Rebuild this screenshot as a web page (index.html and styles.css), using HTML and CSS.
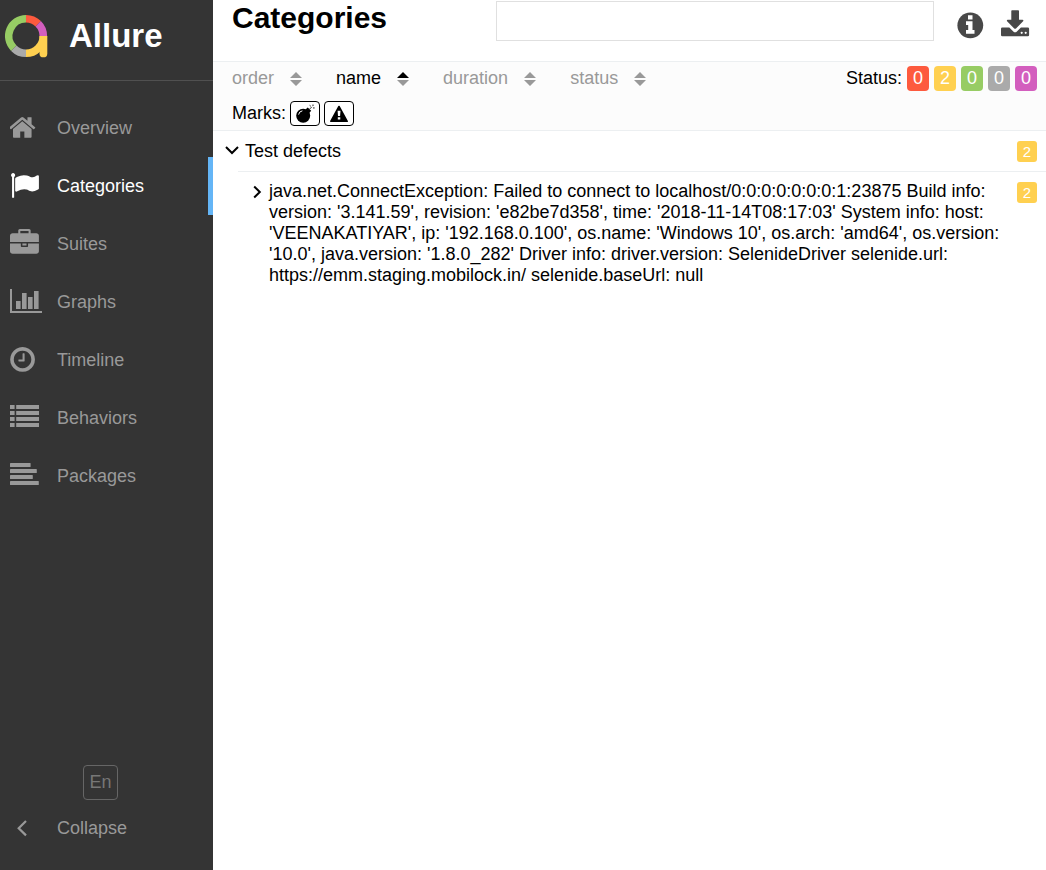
FILE: index.html
```html
<!DOCTYPE html>
<html lang="en">
<head>
<meta charset="utf-8">
<title>Allure - Categories</title>
<link rel="stylesheet" href="styles.css">
</head>
<body>
<div class="app">
  <aside class="side">
    <div class="brand">
      <svg class="logo" viewBox="0 0 46 46" fill="none" stroke-width="7.6">
        <path stroke="#97cc64" d="M9.8 35.2A17.3 17.3 0 0 1 22 5.7"/>
        <path stroke="#fd5a3e" d="M22 5.7A17.3 17.3 0 0 1 34.2 10.8"/>
        <path stroke="#d35ebe" d="M34.2 10.8A17.3 17.3 0 0 1 39.3 23"/>
        <path stroke="#aaa" d="M22 40.3A17.3 17.3 0 0 1 9.8 35.2"/>
        <path stroke="#ffd050" d="M39.3 23A17.3 17.3 0 0 1 22 40.3"/>
        <path fill="#ffd050" d="M35.5 23h7.8v17.4a3.9 3.9 0 0 1-7.8 0z"/>
      </svg>
      <span class="brand-name">Allure</span>
    </div>
    <nav class="menu">
      <a class="item" href="#"><svg class="icon" viewBox="0 0 2108 1860"><path transform="translate(-70)" d="M1408 992v480q0 26-19 45t-45 19h-384v-384h-256v384h-384q-26 0-45-19t-19-45v-480q0-1 .5-3t.5-3l575-474 575 474q1 2 1 6zm223-69l-62 74q-8 9-21 11h-3q-13 0-21-7l-692-577-692 577q-12 8-24 7-13-2-21-11l-62-74q-8-10-7-23.5t11-21.5l719-599q32-26 76-26t76 26l244 204v-195q0-14 9-23t23-9h192q14 0 23 9t9 23v408l219 182q10 8 11 21.5t-7 23.5z"/></svg>Overview</a>
      <a class="item active" href="#" aria-current="page"><svg class="icon" viewBox="0 0 2108 1860"><path d="M320 256q0 72-64 110v1266q0 13-9.5 22.5t-22.5 9.5h-64q-13 0-22.5-9.5t-9.5-22.5v-1266q-64-38-64-110 0-53 37.5-90.5t90.5-37.5 90.5 37.5 37.5 90.5zm1472 64v763q0 25-12.5 38.5t-39.5 27.5q-215 116-369 116-61 0-123.5-22t-108.5-48-115.5-48-142.5-22q-192 0-464 146-17 9-33 9-26 0-45-19t-19-45v-742q0-32 31-55 21-14 79-43 236-120 421-120 107 0 200 29t219 88q38 19 88 19 54 0 117.5-21t110-47 88-47 54.5-21q26 0 45 19t19 45z"/></svg>Categories</a>
      <a class="item" href="#"><svg class="icon" viewBox="0 0 2108 1860"><path d="M640 256h512v-128h-512v128zm1152 640v480q0 66-47 113t-113 47h-1472q-66 0-113-47t-47-113v-480h672v160q0 26 19 45t45 19h320q26 0 45-19t19-45v-160h672zm-768 0v128h-256v-128h256zm768-480v384h-1792v-384q0-66 47-113t113-47h352v-160q0-40 28-68t68-28h576q40 0 68 28t28 68v160h352q66 0 113 47t47 113z"/></svg>Suites</a>
      <a class="item" href="#"><svg class="icon" viewBox="0 0 34 30"><path d="M0 2h2v22h30v2H0zM6 14h4.6v8H6zM12 6h4.6v16H12zM18 10h4.6v12H18zM24 4h4.6v18H24z"/></svg>Graphs</a>
      <a class="item" href="#"><svg class="icon" viewBox="0 0 2108 1860"><path transform="translate(-118)" d="M1024 544v448q0 14-9 23t-23 9h-320q-14 0-23-9t-9-23v-64q0-14 9-23t23-9h224v-352q0-14 9-23t23-9h64q14 0 23 9t9 23zm416 352q0-148-73-273t-198-198-273-73-273 73-198 198-73 273 73 273 198 198 273 73 273-73 198-198 73-273zm224 0q0 209-103 385.5t-279.5 279.5-385.5 103-385.5-103-279.5-279.5-103-385.5 103-385.5 279.5-279.5 385.5-103 385.5 103 279.5 279.5 103 385.5z"/></svg>Timeline</a>
      <a class="item" href="#"><svg class="icon" viewBox="0 0 34 30"><path d="M0 2h4.6v4H0zM0 8h4.6v4H0zM0 14h4.6v4H0zM0 20h4.6v4H0zM6.2 2H29v4H6.2zM6.2 8H29v4H6.2zM6.2 14H29v4H6.2zM6.2 20H29v4H6.2z"/></svg>Behaviors</a>
      <a class="item" href="#"><svg class="icon" viewBox="0 0 34 30"><rect y="2" width="20.6" height="4" rx=".6"/><rect y="8" width="26.8" height="4" rx=".6"/><rect y="14" width="22.8" height="4" rx=".6"/><rect y="20" width="28.8" height="4" rx=".6"/></svg>Packages</a>
    </nav>
    <div class="side-foot">
      <button class="lang" type="button">En</button>
      <button class="collapse" type="button"><svg class="icon" viewBox="0 0 34 30" fill="none" stroke="currentColor" stroke-width="2.2"><path fill="none" d="M16 7l-7.3 7.2 7.3 7.2"/></svg>Collapse</button>
    </div>
  </aside>
  <main class="content">
    <header class="head">
      <h1 class="title">Categories</h1>
      <input class="search" type="text" aria-label="Search">
      <div class="tools">
        <button class="tool" type="button" aria-label="Info"><svg class="tool-icon" viewBox="0 0 30 30"><circle cx="15.3" cy="15.3" r="12.9" fill="#484848"/><path fill="#fff" d="M13 5.3h4.5v4.2H13zM11 11.3h6.5v8.6h2v3.9H11v-3.9h2.2v-4.8H11z"/></svg></button>
        <button class="tool" type="button" aria-label="Download"><svg class="tool-icon" viewBox="0 0 30 30"><path fill="#484848" d="M12 .3h6.2a.8.8 0 0 1 .8.8v8.7h3.5c.9 0 1.2.9.6 1.5l-7.1 7.1a1.3 1.3 0 0 1-1.8 0l-7.1-7.1c-.6-.6-.2-1.5.6-1.5h3.6V1.1a.8.8 0 0 1 .7-.8z"/><path fill="#484848" d="M2.3 17.5h7l4 4a2.6 2.6 0 0 0 3.6 0l4-4h6.9a1.3 1.3 0 0 1 1.3 1.3v6.1a1.3 1.3 0 0 1-1.3 1.3H2.3A1.3 1.3 0 0 1 1 24.9v-6.1a1.3 1.3 0 0 1 1.3-1.3z"/><circle cx="21.7" cy="22.8" r="1.1" fill="#fff"/><circle cx="25.7" cy="22.8" r="1.1" fill="#fff"/></svg></button>
      </div>
    </header>
    <section class="filters">
      <div class="row">
        <div class="sorts">
          <button class="sort" type="button">order<svg class="arrows" viewBox="0 0 12 16"><path d="M6 1l6 6H0zM0 9h12l-6 6z"/></svg></button>
          <button class="sort on" type="button">name<svg class="arrows" viewBox="0 0 12 16"><path class="up" d="M6 1l6 6H0z"/><path d="M0 9h12l-6 6z"/></svg></button>
          <button class="sort" type="button">duration<svg class="arrows" viewBox="0 0 12 16"><path d="M6 1l6 6H0zM0 9h12l-6 6z"/></svg></button>
          <button class="sort" type="button">status<svg class="arrows" viewBox="0 0 12 16"><path d="M6 1l6 6H0zM0 9h12l-6 6z"/></svg></button>
        </div>
        <div class="statuses">
          <span>Status:</span>
          <button class="chip failed" type="button">0</button>
          <button class="chip broken" type="button">2</button>
          <button class="chip passed" type="button">0</button>
          <button class="chip skipped" type="button">0</button>
          <button class="chip unknown" type="button">0</button>
        </div>
      </div>
      <div class="marks">
        <span>Marks:</span>
        <button class="mark" type="button" aria-label="Flaky"><svg class="mark-icon" viewBox="0 0 22 20"><circle cx="9.2" cy="11.8" r="7"/><path d="M11.5 5.5l2.2-2 3.5 3.3-2 2.2z"/><path fill="none" stroke="#fcfcfc" stroke-width="1" d="M4.6 10.6a4.6 4.6 0 0 1 3.8-3.8"/><path fill="none" stroke="#333" stroke-width="1" d="M15.3 5.4l2.6-2.6M15.6 1.3l1.3 1M18.2 1.2h1.6M19.9 3v1.8"/></svg></button>
        <button class="mark" type="button" aria-label="New failed"><svg class="mark-icon" viewBox="0 0 22 20"><path stroke="#000" stroke-width="1.6" stroke-linejoin="round" d="M11 2.5L19.2 17.3H2.8z"/><path fill="#fff" d="M9.6 6.8h2.9l-.4 5.3H10zM9.8 13.2h2.5v2.3H9.8z"/></svg></button>
      </div>
    </section>
    <section class="tree">
      <div class="group">
        <svg class="chev" viewBox="0 0 14 14"><path d="M1 3l6 6 6-6"/></svg>
        <span class="group-name">Test defects</span>
        <span class="count">2</span>
      </div>
      <div class="child">
        <svg class="chev" viewBox="0 0 14 14"><path d="M4.2 1.5l5.6 5.5-5.6 5.5"/></svg>
        <span class="child-name">java.net.ConnectException: Failed to connect to localhost/0:0:0:0:0:0:0:1:23875 Build info: version: '3.141.59', revision: 'e82be7d358', time: '2018-11-14T08:17:03' System info: host: 'VEENAKATIYAR', ip: '192.168.0.100', os.name: 'Windows 10', os.arch: 'amd64', os.version: '10.0', java.version: '1.8.0_282' Driver info: driver.version: SelenideDriver selenide.url: https://emm.staging.mobilock.in/ selenide.baseUrl: null</span>
        <span class="count">2</span>
      </div>
    </section>
  </main>
</div>
</body>
</html>
```
FILE: styles.css
```css
* { box-sizing: border-box; }
body {
  margin: 0;
  font: 18px/21px "Liberation Sans", Arial, sans-serif;
  color: #000;
  background: #fff;
}
button { font: inherit; color: inherit; background: none; border: 0; padding: 0; margin: 0; }
svg { display: block; flex: none; }

.app { display: flex; min-height: 100vh; }

.side {
  flex: 0 0 213px;
  display: flex;
  flex-direction: column;
  background: #343434;
  color: #999;
}
.brand {
  display: flex;
  align-items: center;
  gap: 19px;
  height: 81px;
  padding: 0 4px 8px;
  border-bottom: 1px solid #505050;
}
.logo { width: 46px; height: 46px; }
.brand-name { font-size: 33px; line-height: 40px; font-weight: bold; color: #fff; }
.menu { padding-top: 18px; }
.item {
  display: flex;
  align-items: center;
  gap: 13px;
  height: 58px;
  padding-left: 10px;
  color: inherit;
  text-decoration: none;
}
.item.active { color: #fff; border-right: 5px solid #64b5f6; }
.icon { width: 34px; height: 30px; fill: currentColor; }
.side-foot {
  display: flex;
  flex-direction: column;
  align-items: flex-start;
  margin-top: auto;
  padding-bottom: 13px;
}
.lang {
  width: 35px;
  height: 35px;
  margin-left: 83px;
  border: 1px solid #666;
  border-radius: 4px;
  color: #777;
}
.collapse {
  display: flex;
  align-items: center;
  gap: 13px;
  height: 57px;
  padding-left: 10px;
}

.content { flex: 1; min-width: 0; }
.head {
  display: flex;
  align-items: flex-start;
  height: 61px;
  padding: 1px 16px 0 19px;
}
.title { flex: 0 0 264px; margin: 0; font-size: 30px; line-height: 34px; font-weight: bold; }
.search {
  flex: 1;
  min-width: 0;
  height: 40px;
  padding: 0 10px;
  font: inherit;
  border: 1px solid #e0e0e0;
  background: #fff;
}
.tools { display: flex; gap: 15px; padding: 9px 0 0 21px; }
.tool-icon { width: 30px; height: 30px; }

.filters {
  padding: 4px 9px 4px 19px;
  background: #fcfcfc;
  border-top: 1px solid #eceff1;
  border-bottom: 1px solid #eceff1;
}
.row { display: flex; justify-content: space-between; }
.sorts { display: flex; gap: 34px; height: 25px; }
.sort { display: flex; align-items: center; gap: 16px; color: #999; }
.sort.on { color: #000; }
.arrows { width: 12px; height: 16px; fill: #999; }
.up { fill: #000; }
.statuses { display: flex; align-items: center; gap: 5px; }
.chip { width: 22px; height: 25px; border-radius: 4px; color: #fff; }
.failed { background: #fd5a3e; }
.broken { background: #ffd050; }
.passed { background: #97cc64; }
.skipped { background: #aaa; }
.unknown { background: #d35ebe; }
.marks { display: flex; align-items: center; gap: 4px; padding-top: 10px; }
.mark {
  display: flex;
  align-items: center;
  justify-content: center;
  width: 30px;
  height: 25px;
  border: 1px solid #000;
  border-radius: 4px;
  background: #fff;
}
.mark-icon { width: 22px; height: 20px; }

.chev { width: 14px; height: 14px; fill: none; stroke: #000; stroke-width: 2; }
.group { display: flex; align-items: center; gap: 6px; height: 40px; padding: 0 9px 0 12px; }
.group-name { flex: 1; }
.child {
  display: flex;
  align-items: flex-start;
  gap: 5px;
  margin-left: 25px;
  padding: 9px 9px 9px 12px;
  border-top: 1px solid #eceff1;
}
.child .chev { margin-top: 4px; }
.child .count { margin-top: 1px; }
.child-name { flex: 1; padding-right: 8px; overflow-wrap: anywhere; }
.count {
  width: 20px;
  height: 21px;
  border-radius: 3px;
  background: #ffd050;
  color: #fff;
  font-size: 15px;
  text-align: center;
}
```
